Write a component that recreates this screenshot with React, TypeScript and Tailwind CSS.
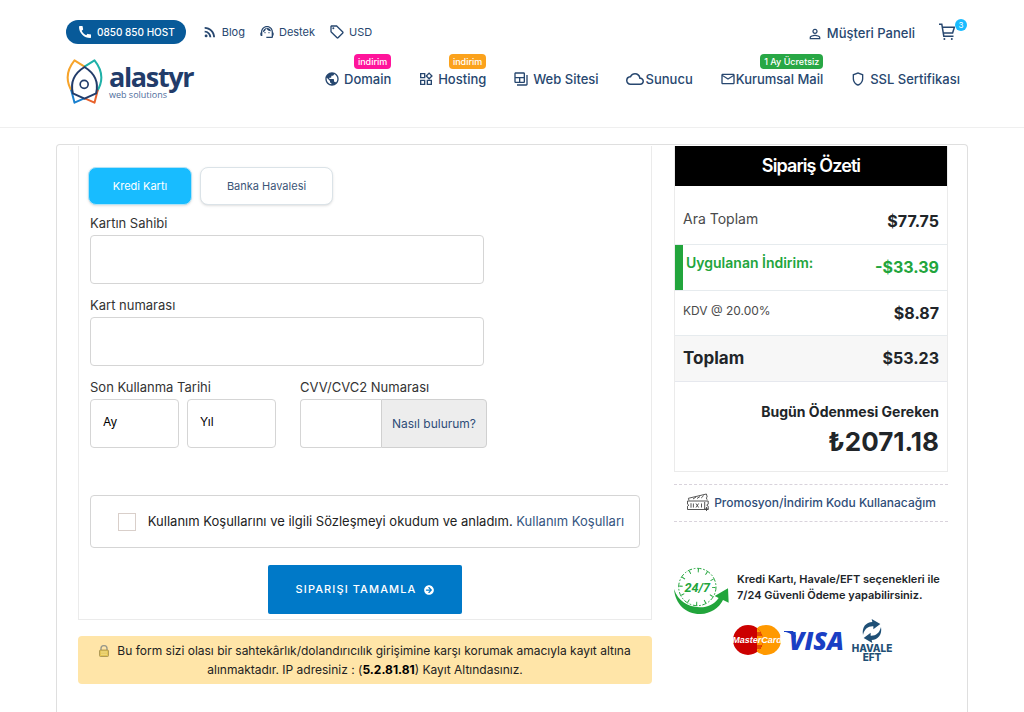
import { ReactNode } from 'react'
import {
  MdCall,
  MdRssFeed,
  MdSupportAgent,
  MdOutlineSell,
  MdPersonOutline,
  MdPublic,
  MdOutlineWidgets,
  MdOutlineBackupTable,
  MdOutlineCloud,
  MdMailOutline,
  MdOutlineShield,
} from 'react-icons/md'
import { FaArrowCircleRight } from 'react-icons/fa'

interface NavItem {
  label: string
  icon: ReactNode
  gapClass: string
  badge?: string
  badgeClass?: string
}

const navItems: NavItem[] = [
  { label: 'Domain', icon: <MdPublic className="size-4" />, gapClass: 'gap-1', badge: 'indirim', badgeClass: 'bg-[#ff149b]' },
  { label: 'Hosting', icon: <MdOutlineWidgets className="size-4" />, gapClass: 'gap-1', badge: 'indirim', badgeClass: 'bg-[#fba21c]' },
  { label: 'Web Sitesi', icon: <MdOutlineBackupTable className="size-4" />, gapClass: 'gap-1' },
  { label: 'Sunucu', icon: <MdOutlineCloud className="size-[18px]" />, gapClass: 'gap-0.5' },
  { label: 'Kurumsal Mail', icon: <MdMailOutline className="size-4" />, gapClass: 'gap-0', badge: '1 Ay Ücretsiz', badgeClass: 'bg-[#28a745]' },
  { label: 'SSL Sertifikası', icon: <MdOutlineShield className="size-4" />, gapClass: 'gap-1' },
]

export default function App() {
  return (
    <div className="flex min-h-screen flex-col bg-white font-['Inter',sans-serif] text-[#212529]">
      <Header />
      <main className="mx-14 mt-4 grid flex-1 grid-cols-[minmax(0,1fr)_274px] items-start gap-[22px] rounded-t border border-b-0 border-[#dfdfdf] pt-px pr-[19px] pl-[21px]">
        <div>
          <PaymentForm />
          <p className="mt-4 rounded bg-[#ffe5a8] px-3 py-[5px] text-center text-xs leading-[19px] text-[#222]">
            <LockIcon />
            Bu form sizi olası bir sahtekârlık/dolandırıcılık girişimine karşı korumak amacıyla kayıt altına
            alınmaktadır. IP adresiniz : (<strong className="text-black">5.2.81.81</strong>) Kayıt Altındasınız.
          </p>
        </div>
        <aside>
          <OrderSummary />
          <PaymentInfo />
        </aside>
      </main>
    </div>
  )
}

function Header() {
  return (
    <header className="border-b border-[#efefef] pt-5 pb-[23px] text-[#27476f]">
      <div className="mr-16 ml-[66px] flex h-6 items-center">
        <a href="#" className="flex h-6 items-center gap-1 rounded-full bg-[#085a99] px-[11px] text-[10px] font-medium text-white">
          <MdCall className="size-4" />
          0850 850 HOST
        </a>
        <nav className="ml-4 flex items-center gap-3.5 text-[11px]">
          <a href="#" className="flex items-center gap-1">
            <MdRssFeed className="size-4" />
            Blog
          </a>
          <a href="#" className="flex items-center gap-1">
            <MdSupportAgent className="size-4" />
            Destek
          </a>
          <a href="#" className="flex items-center gap-1">
            <MdOutlineSell className="size-4" />
            USD
          </a>
        </nav>
        <div className="ml-auto flex items-center gap-6">
          <a href="#" className="flex items-center gap-1 pt-1 text-[13px] font-medium">
            <MdPersonOutline className="size-4" />
            Müşteri Paneli
          </a>
          <a href="#" aria-label="Sepet" className="relative mr-[5px] block">
            <CartIcon />
            <span className="absolute -top-1 -right-3 flex size-3 items-center justify-center rounded-full bg-[#1abcff] text-[8px] text-white">
              3
            </span>
          </a>
        </div>
      </div>
      <div className="mt-[15px] mr-16 ml-[66px] flex items-center justify-between">
        <a href="#" aria-label="alastyr web solutions" className="flex items-center gap-[6px]">
          <LogoMark />
          <span className="flex flex-col font-['Open_Sans',sans-serif]">
            <span className="text-[27px] leading-[26px] font-bold tracking-tighter text-[#223c6a]">alastyr</span>
            <span className="text-[9px] leading-[9px] text-[#4d6d9c]">web solutions</span>
          </span>
        </a>
        <nav className="mb-[6px] flex w-[636px] items-center justify-between text-[13px] leading-5 font-medium">
          {navItems.map((item) => (
            <a key={item.label} href="#" className={`relative flex items-center ${item.gapClass}`}>
              {item.icon}
              {item.label}
              {item.badge && (
                <span
                  className={`absolute right-0 bottom-full rounded-sm px-1 text-[9px] leading-[15px] font-medium whitespace-nowrap text-white ${item.badgeClass}`}
                >
                  {item.badge}
                </span>
              )}
            </a>
          ))}
        </nav>
      </div>
    </header>
  )
}

function PaymentForm() {
  return (
    <form className="border border-t-0 border-[#ebebeb] px-[11px] pt-[21px] pb-[5px]">
      <div className="-ml-0.5 flex gap-2 text-[11px]">
        <button type="button" className="h-[38px] w-[104px] rounded-lg border border-[#aee3f8] bg-[#18bcff] text-white shadow-sm">
          Kredi Kartı
        </button>
        <button type="button" className="h-[38px] w-[133px] rounded-lg border border-[#dbe3e8] bg-white text-[#3b5577] shadow-sm">
          Banka Havalesi
        </button>
      </div>

      <div className="mt-2 flex flex-col gap-[11px]">
        <Field id="owner" label="Kartın Sahibi">
          <input id="owner" type="text" className="h-[49px] w-[394px] rounded border border-[#d5d5d5] px-3" />
        </Field>
        <Field id="number" label="Kart numarası">
          <input id="number" type="text" className="h-[49px] w-[394px] rounded border border-[#d5d5d5] px-3" />
        </Field>

        <div className="flex gap-6">
          <Field id="month" label="Son Kullanma Tarihi">
            <div className="flex gap-2">
              <select id="month" className="h-[49px] w-[89px] appearance-none rounded border border-[#d5d5d5] bg-white px-3 pb-1 text-xs text-black">
                <option>Ay</option>
              </select>
              <select aria-label="Yıl" className="h-[49px] w-[89px] appearance-none rounded border border-[#d5d5d5] bg-white px-3 pb-1 text-xs text-black">
                <option>Yıl</option>
              </select>
            </div>
          </Field>
          <Field id="cvv" label="CVV/CVC2 Numarası">
            <div className="flex">
              <input id="cvv" type="text" className="h-[49px] w-[81px] rounded-l border border-r-0 border-[#d5d5d5] px-3" />
              <button type="button" className="h-[49px] w-[106px] rounded-r border border-[#d0d0d0] bg-[#ededed] text-xs text-[#2f4d78]">
                Nasıl bulurum?
              </button>
            </div>
          </Field>
        </div>
      </div>

      {/* Terms */}
      <div className="mt-[47px] flex h-[53px] items-center justify-center gap-3 rounded border border-[#d5d5d5] pl-3 text-[13px] text-[#222]">
        <input id="terms" type="checkbox" className="size-[18px] appearance-none border border-[#d9cfca] bg-white" />
        <span>
          <label htmlFor="terms">Kullanım Koşullarını ve ilgili Sözleşmeyi okudum ve anladım.</label>{' '}
          <a href="#" className="text-[#34557f]">
            Kullanım Koşulları
          </a>
        </span>
      </div>

      <button
        type="submit"
        className="mx-auto mt-[17px] flex h-[49px] w-[194px] items-center justify-center gap-2 rounded-xs bg-[#0079c8] text-[11px] font-medium tracking-widest text-white"
      >
        SIPARIŞI TAMAMLA
        <FaArrowCircleRight className="size-[10px]" />
      </button>
    </form>
  )
}

function Field({ id, label, children }: { id: string; label: string; children: ReactNode }) {
  return (
    <div>
      <label htmlFor={id} className="mb-0.5 block text-[13px] leading-5 text-[#333]">
        {label}
      </label>
      {children}
    </div>
  )
}

function OrderSummary() {
  return (
    <section className="border border-t-0 border-[#ebebeb]">
      <h2 className="bg-black text-center text-lg leading-10 font-semibold tracking-tighter text-white">Sipariş Özeti</h2>
      <table className="w-full border-collapse text-sm">
        <tbody>
          <tr className="h-[58px] border-b border-[#e6ebee]">
            <th scope="row" className="pt-2 pl-2 text-left font-normal text-[#4a4a4a]">Ara Toplam</th>
            <td className="pt-3 pr-2 text-right text-base font-bold">$77.75</td>
          </tr>
          <tr className="h-[46px] border-b border-[#e6ebee] text-[#22a53c]">
            <th scope="row" className="pb-2 pl-[11px] text-left font-semibold shadow-[inset_8px_0_#22a53c]">Uygulanan İndirim:</th>
            <td className="pr-2 text-right text-base font-bold">-$33.39</td>
          </tr>
          <tr className="h-[45px] border-b border-[#e6ebee]">
            <th scope="row" className="pb-1 pl-2 text-left text-xs font-normal text-[#4a4a4a]">KDV @ 20.00%</th>
            <td className="pr-2 text-right text-base font-bold">$8.87</td>
          </tr>
          <tr className="h-[46px] border-b border-[#e6e8ee] bg-[#f7f7f7] font-bold">
            <th scope="row" className="pl-2 text-left text-[17px]">Toplam</th>
            <td className="pr-2 text-right text-base">$53.23</td>
          </tr>
        </tbody>
      </table>
      <div className="pt-5 pr-2 pb-[11px] text-right">
        <p className="text-sm leading-5 font-bold">Bugün Ödenmesi Gereken</p>
        <p className="mt-0.5 text-[26px] leading-9 font-bold">₺2071.18</p>
      </div>
    </section>
  )
}

function PaymentInfo() {
  return (
    <>
      <a
        href="#"
        className="mt-3 flex h-[38px] items-center justify-center gap-1 border-y border-dashed border-[#d9d3dc] text-xs font-medium whitespace-nowrap text-[#2f4d78]"
      >
        <CouponIcon />
        Promosyon/İndirim Kodu Kullanacağım
      </a>
      <div className="mt-[45px] flex items-center gap-2">
        <ClockIcon />
        <p className="pb-2 text-[11px] leading-4 font-semibold whitespace-nowrap">
          Kredi Kartı, Havale/EFT seçenekleri ile
          <br />
          7/24 Güvenli Ödeme yapabilirsiniz.
        </p>
      </div>
      <div className="mt-1 flex items-center justify-center">
        <MasterCardLogo />
        <VisaLogo />
        <div className="flex flex-col items-center text-center text-[10px] leading-[9px] font-extrabold text-[#1f5076]">
          <TransferIcon />
          <span>HAVALE</span>
          <span>EFT</span>
        </div>
      </div>
    </>
  )
}

function LogoMark() {
  return (
    <svg className="h-[45px] w-[37px]" viewBox="0 0 110 135" fill="none" strokeWidth="6" strokeLinejoin="round">
      <path d="M55 23 L25 4 C4 30 -6 60 18 98" stroke="#f7a42b" />
      <path d="M55 23 L85 4 C106 30 116 60 92 98" stroke="#1fb1a8" />
      <path d="M15 92 L25 131 L54 118" stroke="#1a80cf" />
      <path d="M95 92 L85 131 L56 118" stroke="#e8622c" />
      <path d="M55 24 C26 42 12 70 20 103 L55 119 L90 103 C98 70 84 42 55 24Z" stroke="#223c6a" />
      <circle cx="54" cy="76" r="12" stroke="#223c6a" strokeWidth="5" />
    </svg>
  )
}

function CartIcon() {
  return (
    <svg className="h-[18px] w-4" viewBox="0 0 16 18" fill="none" stroke="currentColor" strokeWidth="1.5">
      <path d="M0 1.2h2.8l2 12h9.7M3.4 4.2h12L13.6 10H4.3" />
      <circle cx="5.4" cy="16" r="1" fill="currentColor" stroke="none" />
      <circle cx="12.8" cy="16" r="1" fill="currentColor" stroke="none" />
    </svg>
  )
}

function LockIcon() {
  return (
    <svg className="mr-2 inline-block h-3 w-[10px] align-[-2px]" viewBox="0 0 10 12">
      <path d="M2 6V3.6a3 3 0 0 1 6 0V6" fill="none" stroke="#9a9a8c" strokeWidth="1.4" />
      <rect x="0.5" y="5" width="9" height="6.5" rx="1" fill="#e3c455" stroke="#a18d4c" strokeWidth="0.8" />
      <path d="M2 7h6M2 9.2h6" stroke="#f7e79a" strokeWidth="0.8" />
    </svg>
  )
}

function CouponIcon() {
  return (
    <svg className="h-[19px] w-6 shrink-0" viewBox="0 0 24 19" fill="none" stroke="#444" strokeWidth="0.9">
      <path d="M3 7.5L2.4 5.3 20.4 1l.8 3-.9.9.8 1.8" />
      <path d="M1.5 8h20.7v3.2l-1.5 1 1.5 1v3.3H1.5v-3.3l1.4-1-1.4-1z" fill="#fff" />
      <path d="M5 10.2v4.5M7.4 10.5v4M10 10.5l2.6 4M12.6 10.5l-2.6 4M15.5 10.5v4M18.7 9v7" />
      <path d="M7 6l3-2M11 5.5l3-2M15.2 5l2.5-2.4M20.5 14v4M18.5 16h4" />
    </svg>
  )
}

function ClockIcon() {
  return (
    <svg className="h-12 w-[55px] shrink-0" viewBox="0 0 165 144">
      <circle cx="70" cy="60" r="56" fill="none" stroke="#22a53c" strokeWidth="3" strokeDasharray="14 5 5 5" />
      <circle cx="70" cy="60" r="49" fill="none" stroke="#22a53c" strokeWidth="10" strokeDasharray="3 22.66" />
      <path d="M0 66C4 112 36 142 80 141c30-1 54-17 67-42l17 8-2-43-40 23 12 6c-14 20-35 29-58 28C42 119 12 103 0 66z" fill="#22a53c" />
      <text x="70" y="74" textAnchor="middle" fill="#22a53c" fontFamily="'Liberation Sans Narrow', 'Roboto', sans-serif" fontSize="38" fontWeight="700" fontStyle="italic">
        24/7
      </text>
    </svg>
  )
}

function MasterCardLogo() {
  return (
    <svg className="h-8 w-[54px]" viewBox="0 0 54 32">
      <circle cx="36" cy="16" r="15" fill="#ff9900" />
      <circle cx="18" cy="16" r="15" fill="#cc0000" />
      <path d="M27 4a15 15 0 0 1 0 24" fill="#ff9900" />
      <path d="M25 9h6M24 11h8M24 22h8M25 24h6" stroke="#cc0000" strokeWidth="1" />
      <text x="27" y="19" textAnchor="middle" fill="#fff" fontFamily="'Liberation Sans', sans-serif" fontSize="9" fontWeight="700" fontStyle="italic">
        MasterCard
      </text>
    </svg>
  )
}

function VisaLogo() {
  return (
    <svg className="h-7 w-[68px]" viewBox="0 0 68 28">
      <path d="M0 5h9l3 5-1 3C8 8 5 6 0 6z" fill="#1a3fc4" />
      <text x="5" y="24" fill="#1a3fc4" fontFamily="'Open Sans', sans-serif" fontSize="25" fontWeight="800" fontStyle="italic">
        VISA
      </text>
    </svg>
  )
}

function TransferIcon() {
  return (
    <svg className="mb-px h-6 w-[22px]" viewBox="0 0 66 72" fill="#1f5076">
      <path d="M6 48C2 24 15 10 34 9l-2-9 26 15-21 16v-9C22 21 11 29 6 48z" />
      <path d="M60 24c4 24-9 38-28 39l2 9L8 57l21-16v9c15 1 26-7 31-26z" />
    </svg>
  )
}
